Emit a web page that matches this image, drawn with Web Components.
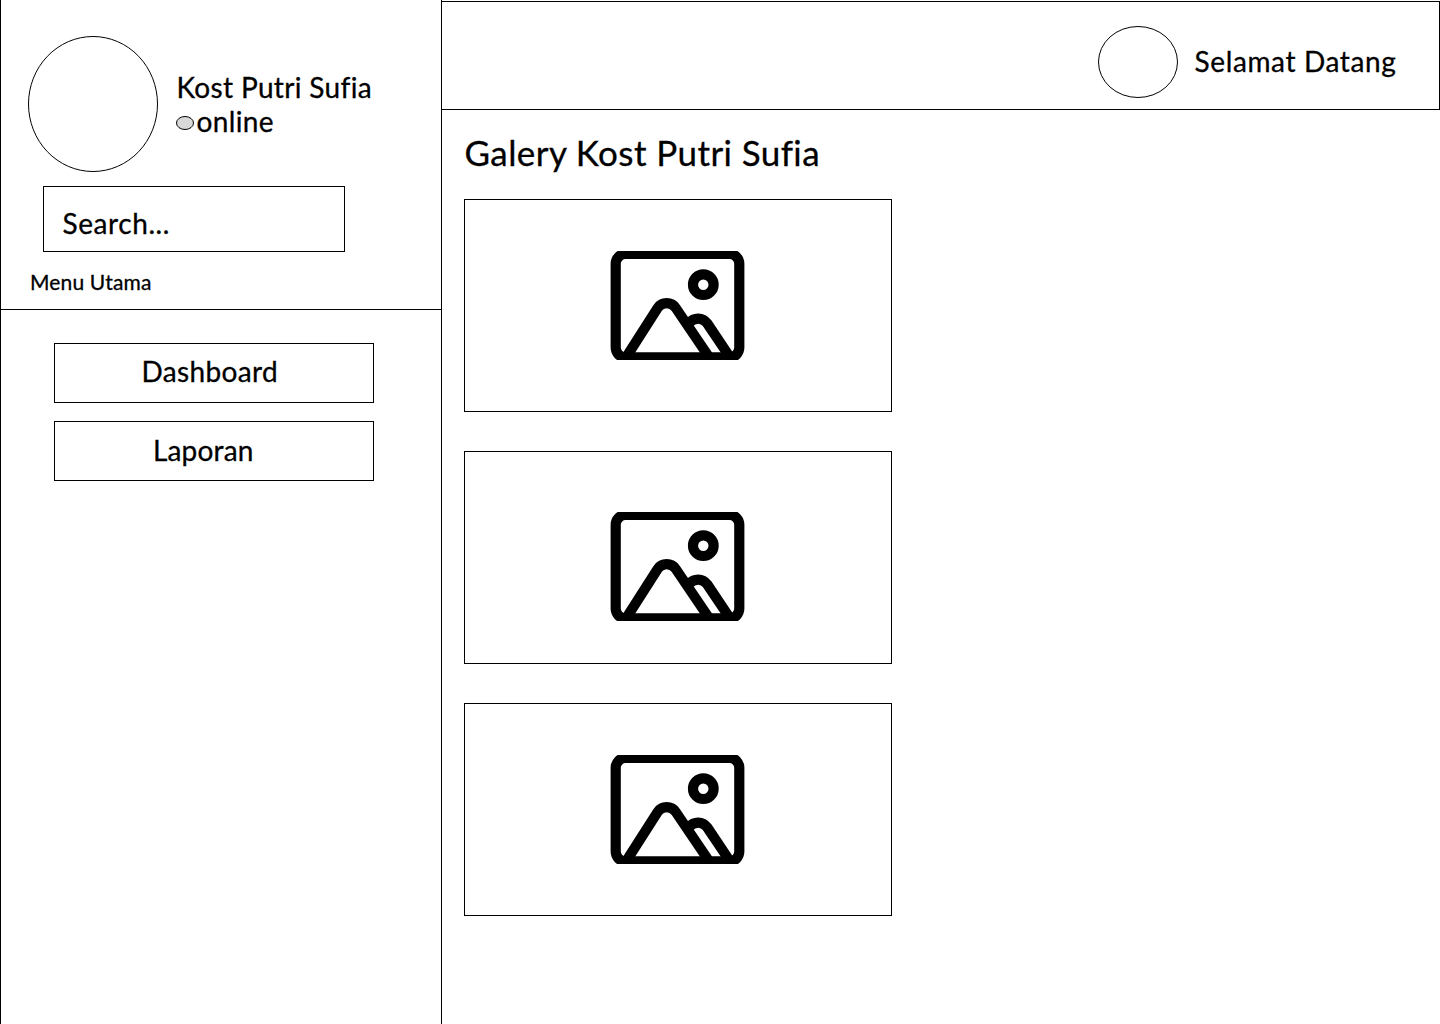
<!DOCTYPE html>
<html lang="id">
<head>
<meta charset="utf-8">
<title>Galery Kost Putri Sufia</title>
<style>
body{margin:0;background:#fff;color:#000;font-family:Lato,"Open Sans",sans-serif}
</style>
</head>
<body>
<kost-page></kost-page>
<script>
// Text line whose tracking is adjusted so that it spans the given width.
customElements.define('fit-text', class extends HTMLElement {
  connectedCallback() {
    const root = this.attachShadow({mode: 'open'});
    root.innerHTML = `<style>
      :host{display:block;white-space:nowrap;width:max-content;line-height:34px;font-size:28px;font-variant-ligatures:none;-webkit-text-stroke:.3px #000}
      span{display:inline-block}
    </style><span><slot></slot></span>`;
    const span = root.querySelector('span');
    const size = this.getAttribute('size');
    if (size) this.style.fontSize = size + 'px';
    const wanted = Number(this.getAttribute('span'));
    const spacing = (wanted - span.getBoundingClientRect().width) / this.textContent.length;
    span.style.letterSpacing = spacing + 'px';
  }
});

customElements.define('round-shape', class extends HTMLElement {
  connectedCallback() {
    const w = Number(this.getAttribute('w')), h = Number(this.getAttribute('h'));
    const fill = this.getAttribute('fill') || '#fff';
    this.attachShadow({mode: 'open'}).innerHTML = `<style>:host{display:block;flex:none}svg{display:block}</style>
      <svg width="${w}" height="${h}"><ellipse cx="${w/2}" cy="${h/2}" rx="${w/2-.5}" ry="${h/2-.5}" fill="${fill}" stroke="#000"/></svg>`;
  }
});

customElements.define('menu-item', class extends HTMLElement {
  connectedCallback() {
    this.attachShadow({mode: 'open'}).innerHTML = `<style>
      :host{display:flex;box-sizing:border-box;width:320px;height:60px;border:1px solid #000}
    </style><slot></slot>`;
  }
});

customElements.define('image-card', class extends HTMLElement {
  connectedCallback() {
    this.attachShadow({mode: 'open'}).innerHTML = `<style>
      :host{display:flex;justify-content:center;align-items:flex-start;box-sizing:border-box;width:428px;height:213px;border:1px solid #000;padding-top:var(--drop,51px)}
      svg{display:block;margin-right:1px}
    </style>
    <svg width="135" height="109" viewBox="0 0 135 109" fill="none" stroke="#000" stroke-width="10.2">
      <rect x="5.7" y="2.9" width="123.6" height="103.5" rx="9.8"/>
      <circle cx="93.3" cy="33.7" r="10.3"/>
      <path d="M16.6 105.5L47.6 57A11 11 0 0 1 65.8 57L99 106"/>
      <path d="M79 72C84 66 92.5 66 97.2 72.3L119.5 105.5"/>
    </svg>`;
  }
});

customElements.define('side-bar', class extends HTMLElement {
  connectedCallback() {
    this.attachShadow({mode: 'open'}).innerHTML = `<style>
      :host{display:block;box-sizing:border-box;width:442px;height:1024px;border:solid #000;border-width:0 1px}
      .top{box-sizing:border-box;height:310px;border-bottom:1px solid #000;padding:36px 0 0 27px}
      .profile{display:flex;gap:18px}
      .name{padding-top:34px}
      .name > fit-text{padding-left:.5px}
      .status{display:flex;align-items:flex-start;gap:2.5px}
      .status round-shape{padding-top:12px}
      .search{box-sizing:border-box;width:302px;height:66px;border:1px solid #000;margin:14px 0 0 15px;padding:19px 0 0 18.5px}
      .caption{padding:13px 0 0 2px}
      nav{display:flex;flex-direction:column;gap:18px;padding:33px 0 0 53px}
    </style>
    <div class="top">
      <div class="profile">
        <round-shape w="130" h="136"></round-shape>
        <div class="name">
          <fit-text span="195.5">Kost Putri Sufia</fit-text>
          <div class="status"><round-shape w="18" h="14" fill="#d9d9d9"></round-shape><fit-text span="77.5">online</fit-text></div>
        </div>
      </div>
      <div class="search"><fit-text span="107.5">Search...</fit-text></div>
      <div class="caption"><fit-text size="21" span="121.5">Menu Utama</fit-text></div>
    </div>
    <nav>
      <menu-item style="padding:10px 0 0 86.5px"><fit-text span="136.5">Dashboard</fit-text></menu-item>
      <menu-item style="padding:11px 0 0 98px"><fit-text span="100.5">Laporan</fit-text></menu-item>
    </nav>`;
  }
});

customElements.define('top-bar', class extends HTMLElement {
  connectedCallback() {
    this.attachShadow({mode: 'open'}).innerHTML = `<style>
      :host{display:flex;justify-content:flex-end;gap:16.5px;box-sizing:border-box;height:109px;margin-top:1px;border:1px solid #000;border-left:0;padding:24px 42.5px 0 0}
      fit-text{padding-top:18px}
    </style><round-shape w="80" h="72"></round-shape><fit-text span="202">Selamat Datang</fit-text>`;
  }
});

customElements.define('kost-page', class extends HTMLElement {
  connectedCallback() {
    this.attachShadow({mode: 'open'}).innerHTML = `<style>
      :host{display:flex;width:1440px;height:1024px;overflow:hidden}
      .content{flex:1;min-width:0}
      .title{padding:25px 0 0 22.5px}
      .cards{display:flex;flex-direction:column;gap:39px;padding:30px 0 0 22px}
    </style>
    <side-bar></side-bar>
    <div class="content">
      <top-bar></top-bar>
      <div class="title"><fit-text size="35" span="355.5">Galery Kost Putri Sufia</fit-text></div>
      <div class="cards">
        <image-card></image-card>
        <image-card style="--drop:60px"></image-card>
        <image-card></image-card>
      </div>
    </div>`;
  }
});
</script>
</body>
</html>
